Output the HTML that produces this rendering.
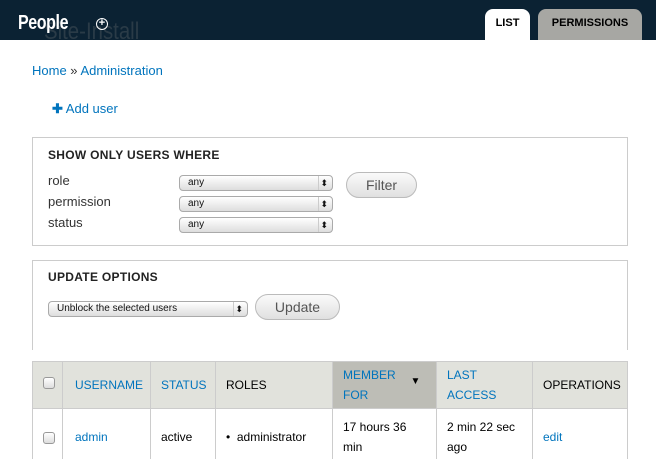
<!DOCTYPE html>
<html><head><meta charset="utf-8"><style>
*{box-sizing:border-box;margin:0;padding:0}
body{width:656px;height:447px;overflow:hidden;background:#fff;font-family:"Liberation Sans",sans-serif;font-size:13px;color:#333;position:relative}
a{color:#0074bd;text-decoration:none}
.hdr{position:absolute;left:0;top:0;width:656px;height:40px;background:#0b2233;overflow:hidden}
.hdr h1{position:absolute;left:18px;top:12px;color:#fff;font-size:20px;font-weight:bold;letter-spacing:-0.5px;transform:scaleX(0.8);transform-origin:left}
.ghost{position:absolute;left:44px;top:18px;color:#2a3b47;font-size:24px;transform:scaleX(0.85);transform-origin:left}
.plus{position:absolute;left:96px;top:18px;width:12px;height:12px;border:1.5px solid #fff;border-radius:50%;color:#fff;font-size:11px;line-height:9px;text-align:center;font-weight:bold}
.tab{position:absolute;top:9px;height:31px;border-radius:8px 8px 0 0;font-size:11px;font-weight:bold;color:#000;text-align:center;line-height:29px}
.abs{position:absolute}
.fs{position:absolute;left:32px;width:596px;border:1px solid #ccc}
.fs h2{position:absolute;left:15px;font-size:12px;font-weight:bold;color:#222;letter-spacing:0.3px}
.lbl{position:absolute;left:15px;font-size:13px}
.sel{position:absolute;height:16px;border:1px solid #aaa;border-radius:4px;background:linear-gradient(#fff,#ddd);font-size:10px;line-height:14px;padding-left:8px;color:#111}
.sel:after{content:"⬍";position:absolute;right:4px;top:0;font-size:9px}
.sel i{position:absolute;right:13px;top:0;bottom:0;border-left:1px solid #ccc}
.btn{position:absolute;height:26px;border:1px solid #bbb;border-radius:13px;background:linear-gradient(#fafafa,#e0e0e0);font-size:14px;color:#555;text-align:center;line-height:24px}
table{position:absolute;left:32px;top:361px;width:596px;border-collapse:collapse;font-size:12px}
th{background:#e1e2dc;height:47px;font-weight:normal;text-align:left;padding-left:12px;border:1px solid #ccc;border-width:1px 1px 1px 0;line-height:20px}
td{height:50px;padding-left:12px;border-right:1px solid #ccc;vertical-align:top;padding-top:18px;line-height:20px}
td.two{padding-top:8px}
.cb{display:inline-block;width:12px;height:12px;border:1px solid #999;border-radius:3px;background:linear-gradient(#fff,#ddd)}
</style></head><body>
<div class="hdr"><span class="ghost">Site-Install</span><h1>People</h1><div class="plus">+</div>
<div class="tab" style="left:485px;width:45px;background:#fff">LIST</div>
<div class="tab" style="left:538px;width:104px;background:#a7a7a3">PERMISSIONS</div></div>
<div class="abs" style="left:32px;top:63px;font-size:13px"><a>Home</a> » <a>Administration</a></div>
<div class="abs" style="left:52px;top:101px;font-size:13px"><a><b>✚</b> Add user</a></div>
<div class="fs" style="top:137px;height:109px">
<h2 style="top:10px">SHOW ONLY USERS WHERE</h2>
<div class="lbl" style="top:35px">role</div><div class="lbl" style="top:56px">permission</div><div class="lbl" style="top:77px">status</div>
<div class="sel" style="left:146px;top:37px;width:154px">any<i></i></div>
<div class="sel" style="left:146px;top:58px;width:154px">any<i></i></div>
<div class="sel" style="left:146px;top:79px;width:154px">any<i></i></div>
<div class="btn" style="left:313px;top:34px;width:71px">Filter</div>
</div>
<div class="fs" style="top:260px;height:90px;border-bottom:none">
<h2 style="top:9px">UPDATE OPTIONS</h2>
<div class="sel" style="left:15px;top:40px;width:200px">Unblock the selected users<i></i></div>
<div class="btn" style="left:222px;top:33px;width:85px">Update</div>
</div>
<table><tr>
<th style="width:30px;border-left:1px solid #ccc;padding-left:10px"><span class="cb"></span></th>
<th style="width:88px"><a>USERNAME</a></th>
<th style="width:65px;padding-left:10px"><a>STATUS</a></th>
<th style="width:117px;color:#000;padding-left:10px">ROLES</th>
<th style="width:104px;background:#bdbdb6;padding-left:10px"><a>MEMBER<br>FOR</a><span style="position:absolute;left:378px;top:10px;font-size:10px;color:#000">▼</span></th>
<th style="width:96px;padding-left:10px"><a>LAST<br>ACCESS</a></th>
<th style="color:#000;padding-left:10px">OPERATIONS</th></tr>
<tr><td style="border-left:1px solid #ccc;padding-left:10px;padding-top:21px"><span class="cb"></span></td>
<td><a>admin</a></td><td style="color:#000;padding-left:10px">active</td>
<td style="color:#000;padding-left:10px">•&nbsp; administrator</td>
<td class="two" style="color:#000;padding-left:10px">17 hours 36<br>min</td><td class="two" style="color:#000;padding-left:10px">2 min 22 sec<br>ago</td><td style="padding-left:10px"><a>edit</a></td></tr>
</table>
</body></html>
